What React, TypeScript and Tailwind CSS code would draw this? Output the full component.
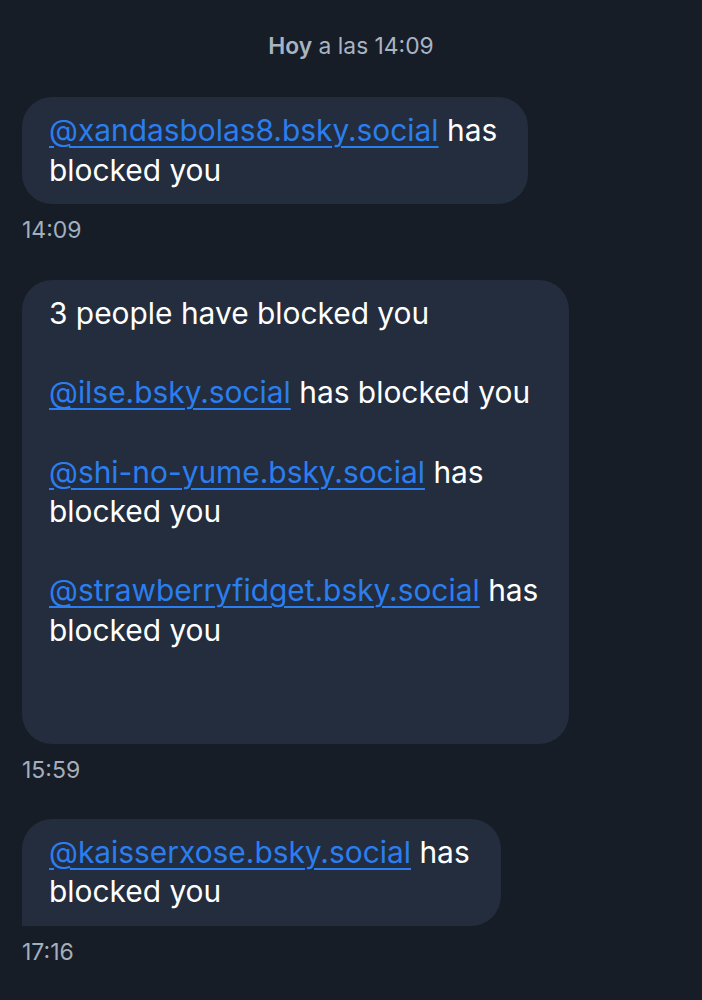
import React from 'react';

const font = { fontFamily: 'Inter, "Noto Sans", sans-serif' };

const Handle: React.FC<{ name: string }> = ({ name }) => (
    <a className="text-[#2b7eef] underline decoration-2 underline-offset-[5px]">@{name}</a>
);

const Bubble: React.FC<{ children: React.ReactNode; tail?: boolean }> = ({ children, tail }) => (
    <div
        className={`w-fit bg-[#232d3d] text-white text-[29.9px] leading-[39.6px] pl-[27px] pr-[31px] py-[14px] whitespace-nowrap rounded-[30px] ${tail ? 'rounded-bl-none' : ''}`}
    >
        {children}
    </div>
);

const Stamp: React.FC<{ time: string }> = ({ time }) => (
    <div className="mt-[12px] text-[23px] leading-[28px] text-[#a3afbd]">{time}</div>
);

export default function App() {
    return (
        <div className="min-h-[1000px] w-[702px] bg-[#161d27] pt-[32px] px-[22px]" style={font}>
            <div className="text-center text-[22.8px] leading-[28px] text-[#a9b4c1]">
                <span className="font-semibold">Hoy</span> a las 14:09
            </div>

            <div className="mt-[37px]">
                <Bubble>
                    <Handle name="xandasbolas8.bsky.social" /> has
                    <br />
                    blocked you
                </Bubble>
            </div>
            <Stamp time="14:09" />

            <div className="mt-[36px]">
                <Bubble>
                    3 people have blocked you
                    <br />
                    <br />
                    <Handle name="ilse.bsky.social" /> has blocked you
                    <br />
                    <br />
                    <Handle name="shi-no-yume.bsky.social" /> has
                    <br />
                    blocked you
                    <br />
                    <br />
                    <Handle name="strawberryfidget.bsky.social" /> has
                    <br />
                    blocked you
                    <br />
                    <br />
                    <br />
                </Bubble>
            </div>
            <Stamp time="15:59" />

            <div className="mt-[35px]">
                <Bubble tail>
                    <Handle name="kaisserxose.bsky.social" /> has
                    <br />
                    blocked you
                </Bubble>
            </div>
            <Stamp time="17:16" />
        </div>
    );
}
